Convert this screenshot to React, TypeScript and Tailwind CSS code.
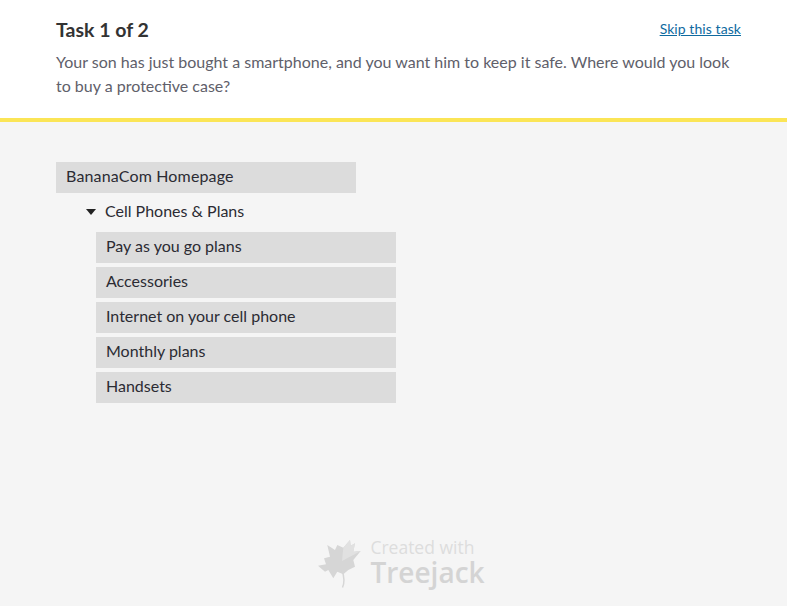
import React from 'react';

const children = ['Pay as you go plans', 'Accessories', 'Internet on your cell phone', 'Monthly plans', 'Handsets'];

const Leaf = () => (
  <svg width="44" height="48" viewBox="0 0 44 48" className="shrink-0 mt-1">
    <path
      d="M32 0 L32.700 5.700 L37 3.300 L35.300 11.700 L42.700 11 L35.300 20 L37 26.700 L30.300 30 L25.300 34.300 L19.300 31.700 L15.300 38.300 L10.300 30 L7 31.700 L0 25.700 L8 24.300 L6 18.300 L12 16.700 L9.300 5 L17 10 L19.300 5 L25.300 7.700 Z"
      fill="#d6d6d6"
    />
    <path d="M32 0 L32.700 5.700 L37 3.300 L35.300 11.700 L42.700 11 L35.300 15 L24 21 L25.300 7.700 Z" fill="#e1e1e1" />
    <path d="M24 30 C26 36 27 42 24.500 47.500" fill="none" stroke="#d6d6d6" strokeWidth="1.500" />
  </svg>
);

export default function App() {
  return (
    <div className="h-[606px] flex flex-col bg-[#f5f5f5] font-['Lato','Liberation_Sans',sans-serif] overflow-hidden">
      <header className="h-[122px] shrink-0 bg-white border-b-4 border-[#fbe556] pl-14 pr-[46px] pt-[18px]">
        <div className="flex items-start justify-between">
          <h1 className="text-[19.5px] leading-6 font-bold text-[#333333]">Task 1 of 2</h1>
          <a href="#" className="text-[14px] tracking-[0.005em] leading-5 mt-[1px] text-[#0f6a9f] underline">Skip this task</a>
        </div>
        <p className="mt-2 text-[16px] leading-6 text-[#60606a]">
          Your son has just bought a smartphone, and you want him to keep it safe. Where would you look
          <br />
          to buy a protective case?
        </p>
      </header>
      <main className="flex-1 pl-14 pt-10">
        <div className="w-[300px] h-[31px] bg-[#dcdcdc] pl-[10px] pb-[3px] flex items-center text-[16px] tracking-[0.01em] text-[#2b2b33]">
          BananaCom Homepage
        </div>
        <div className="mt-1 h-[31px] pl-[30px] pb-[3px] flex items-center text-[16px] text-[#2b2b33]">
          <span className="w-0 h-0 border-x-[5px] border-x-transparent border-t-[6px] border-t-[#222222] mr-[9px] mt-[2px]" />
          Cell Phones &amp; Plans
        </div>
        <ul className="mt-1 ml-10 flex flex-col gap-1">
          {children.map((c) => (
            <li key={c} className="w-[300px] h-[31px] bg-[#dcdcdc] pl-[10px] pb-[3px] flex items-center text-[16px] text-[#2b2b33]">
              {c}
            </li>
          ))}
        </ul>
      </main>
      <footer className="flex justify-center items-start gap-[8px] pb-[18px] pl-[16px]">
        <Leaf />
        <div className="font-['Open_Sans',sans-serif] text-[#dddddd]">
          <div className="text-[17.5px] leading-[22px]">Created with</div>
          <div className="text-[28px] leading-[28px] font-semibold text-[#d4d4d4]">Treejack</div>
        </div>
      </footer>
    </div>
  );
}
